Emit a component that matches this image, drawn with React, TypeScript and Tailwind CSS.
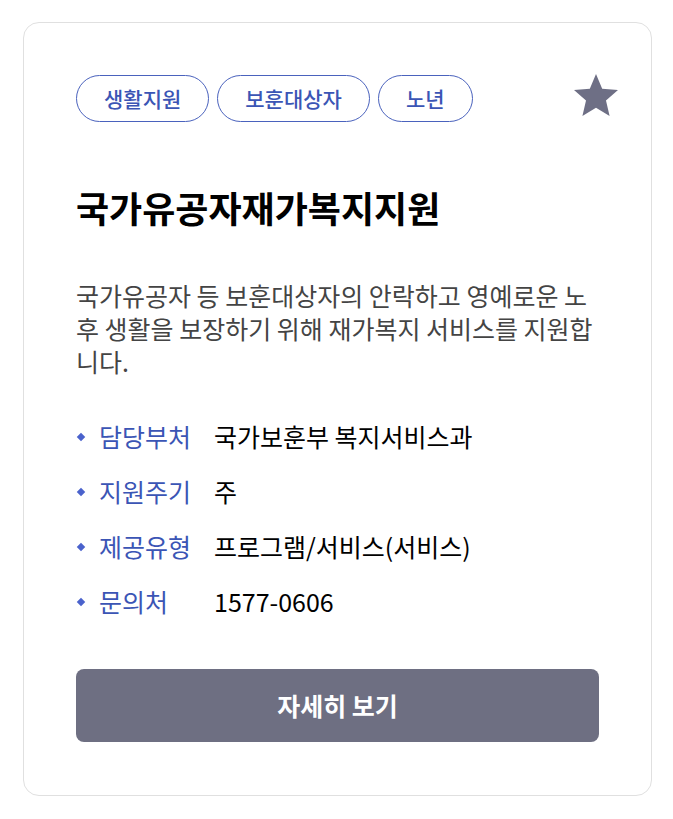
import React from "react";

const font = { fontFamily: '"Noto Sans CJK KR", "Noto Sans", sans-serif' };

export default function App() {
  const rows: [string, string][] = [
    ["담당부처", "국가보훈부 복지서비스과"],
    ["지원주기", "주"],
    ["제공유형", "프로그램/서비스(서비스)"],
    ["문의처", "1577-0606"],
  ];
  return (
    <div className="bg-white w-[673px] h-[819px] pt-[22px] pl-[23px]" style={font}>
      <div className="w-[629px] h-[774px] border border-[#e0e0e0] rounded-[16px] bg-white px-[52px] pt-[52px]">
        <div className="flex items-start justify-between">
          <div className="flex gap-[8px]">
            {["생활지원", "보훈대상자", "노년"].map((t) => (
              <span
                key={t}
                className="h-[47px] px-[27px] flex items-center rounded-full border border-[#4a62bd] text-[#3b55b5] text-[21px] font-medium"
              >
                {t}
              </span>
            ))}
          </div>
          <svg width="44" height="42" viewBox="2 2 20 19" className="mr-[-19px] mt-[-1px]">
            <path
              d="M12 17.27L18.18 21l-1.64-7.03L22 9.24l-7.19-.61L12 2 9.19 8.63 2 9.24l5.46 4.73L5.82 21z"
              fill="#6e6f85"
            />
          </svg>
        </div>
        <h1 className="mt-[61px] text-[36px] font-bold text-black leading-[48px]">
          국가유공자재가복지지원
        </h1>
        <p className="mt-[48px] text-[25px] text-[#444] leading-[33px] break-all">
          국가유공자 등 보훈대상자의 안락하고 영예로운 노후 생활을 보장하기 위해 재가복지 서비스를 지원합니다.
        </p>
        <div className="mt-[42px] flex flex-col gap-[22px]">
          {rows.map(([k, v]) => (
            <div key={k} className="flex items-center h-[33px] text-[25px]">
              <span className="w-[6px] h-[6px] bg-[#4a62cc] rotate-45 ml-[2px] mr-[15px]" />
              <span className="w-[115px] text-[#3b55b5]">{k}</span>
              <span className="text-black">{v}</span>
            </div>
          ))}
        </div>
        <button className="mt-[51px] w-full h-[73px] rounded-[8px] bg-[#6e6f82] text-white text-[25px] font-bold">
          자세히 보기
        </button>
      </div>
    </div>
  );
}
